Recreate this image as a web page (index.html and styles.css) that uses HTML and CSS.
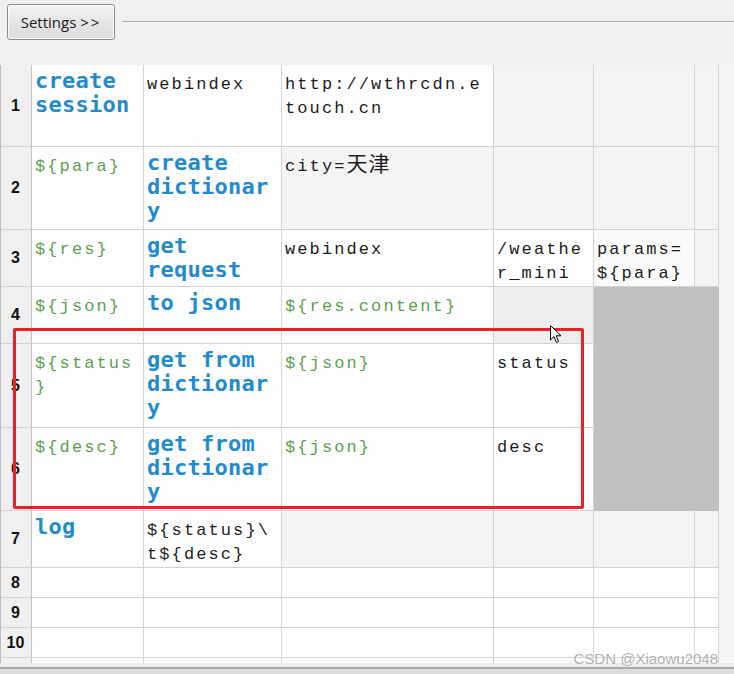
FILE: index.html
```html
<!DOCTYPE html>
<html>
<head>
<meta charset="utf-8">
<link rel="stylesheet" href="styles.css">
</head>
<body>
<div class="app">
  <div class="toolbar">
    <button class="settings">Settings <span class="arrows">&gt;&gt;</span></button>
    <div class="rule"></div>
  </div>
  <div class="sheet">
    <div class="grid">
      <div class="hd">1</div>
      <div class="cell kw">create session</div>
      <div class="cell tx">webindex</div>
      <div class="cell tx">http://wthrcdn.etouch.cn</div>
      <div class="cell off"></div>
      <div class="cell off"></div>
      <div class="cell off"></div>

      <div class="hd">2</div>
      <div class="cell var">${para}</div>
      <div class="cell kw">create dictionary</div>
      <div class="cell tx off">city=<span class="cjk">天津</span></div>
      <div class="cell off"></div>
      <div class="cell off"></div>
      <div class="cell off"></div>

      <div class="hd">3</div>
      <div class="cell var">${res}</div>
      <div class="cell kw">get request</div>
      <div class="cell tx">webindex</div>
      <div class="cell tx">/weather_mini</div>
      <div class="cell tx soft">params=${para}</div>
      <div class="cell off"></div>

      <div class="hd">4</div>
      <div class="cell var">${json}</div>
      <div class="cell kw">to json</div>
      <div class="cell var">${res.content}</div>
      <div class="cell off2"></div>
      <div class="dark"></div>

      <div class="hd">5</div>
      <div class="cell var">${status}</div>
      <div class="cell kw">get from dictionary</div>
      <div class="cell var">${json}</div>
      <div class="cell tx">status</div>

      <div class="hd">6</div>
      <div class="cell var">${desc}</div>
      <div class="cell kw">get from dictionary</div>
      <div class="cell var">${json}</div>
      <div class="cell tx">desc</div>

      <div class="hd">7</div>
      <div class="cell kw">log</div>
      <div class="cell tx">${status}\t${desc}</div>
      <div class="cell off"></div>
      <div class="cell off"></div>
      <div class="cell off"></div>
      <div class="cell off"></div>

      <div class="hd">8</div>
      <div class="cell"></div><div class="cell"></div><div class="cell"></div><div class="cell"></div><div class="cell"></div><div class="cell"></div>
      <div class="hd">9</div>
      <div class="cell"></div><div class="cell"></div><div class="cell"></div><div class="cell"></div><div class="cell"></div><div class="cell"></div>
      <div class="hd">10</div>
      <div class="cell"></div><div class="cell"></div><div class="cell"></div><div class="cell"></div><div class="cell"></div><div class="cell"></div>
      <div class="hd"></div>
      <div class="cell"></div><div class="cell"></div><div class="cell"></div><div class="cell"></div><div class="cell"></div><div class="cell"></div>
    </div>
  </div>
  <div class="hscroll"></div>

  <div class="highlight"></div>
  <svg class="cursor" width="12" height="19" viewBox="0 0 12 19">
    <path d="M0.5 0.5 L0.5 15 L4 11.6 L6.4 17.4 L8.6 16.5 L6.2 10.8 L11 10.8 Z" fill="#fff" stroke="#000" stroke-width="1" stroke-linejoin="round"/>
  </svg>
  <div class="watermark">CSDN @Xiaowu2048</div>
</div>
</body>
</html>
```

FILE: styles.css
```css
* { box-sizing: border-box; }

body {
  margin: 0;
  background: #f0f0f0;
}

.app {
  position: relative;
  width: 734px;
  height: 674px;
  overflow: hidden;
  background: #f0f0f0;
  display: flex;
  flex-direction: column;
}

.toolbar {
  height: 65px;
  flex: none;
  display: flex;
  align-items: flex-start;
  padding: 4px 0 0 7px;
}

.settings {
  width: 108px;
  height: 36px;
  margin: 0;
  padding: 0 0 1px 0;
  border: 1px solid #8c8c8c;
  border-radius: 3px;
  background: linear-gradient(#f4f4f4, #e4e4e4 55%, #dcdcdc);
  box-shadow: inset 0 0 0 1px #fbfbfb;
  font-family: "Open Sans", "Liberation Sans", sans-serif;
  font-size: 15px;
  color: #1a1a1a;
  text-align: center;
}

.arrows {
  letter-spacing: 2px;
}

.rule {
  flex: 1;
  margin: 17px 0 0 7px;
  border-top: 1px solid #a6a6a6;
  border-bottom: 1px solid #fafafa;
}

.sheet {
  height: 598px;
  flex: none;
  overflow: hidden;
  background: #f5f5f5;
}

.grid {
  display: grid;
  width: max-content;
  border-left: 1px solid #bdbdbd;
  grid-template-columns: 31px 112px 138px 212px 100px 101px 24px;
  grid-template-rows: 82px 83px 57px 57px 84px 83px 57px 30px 30px 30px 30px;
}

.hd {
  background: #f0f0f0;
  border-right: 1px solid #c4c4c4;
  border-bottom: 1px solid #d0d0d0;
  display: flex;
  align-items: center;
  justify-content: center;
  padding-right: 1px;
  font-family: "Liberation Sans", Arial, sans-serif;
  font-weight: bold;
  font-size: 16px;
  color: #111;
}

.cell {
  background: #fefefe;
  border-right: 1px solid #d2d2d2;
  border-bottom: 1px solid #d2d2d2;
  padding: 8px 2px 0 3px;
  line-height: 24px;
  overflow: hidden;
}

.tx, .var {
  font-family: "Liberation Mono", "Noto Sans CJK SC", monospace;
  font-size: 17px;
  letter-spacing: 2.1px;
  line-break: anywhere;
  word-break: break-all;
  color: #1c1c1c;
}

.cjk {
  font-family: "Noto Sans CJK SC", sans-serif;
  font-size: 21px;
  line-height: 0;
  letter-spacing: 1px;
}

.var {
  color: #5c9f50;
}

.kw {
  font-family: "DejaVu Sans Mono", monospace;
  font-weight: bold;
  font-size: 22px;
  letter-spacing: 0.25px;
  padding-top: 4px;
  overflow-wrap: anywhere;
  color: #238bcb;
}

.off {
  background: #f4f4f4;
}

.off2 {
  background: #efefef;
}

.soft {
  background: #fafafa;
}

.dark {
  grid-column: 6 / 8;
  grid-row: 4 / 7;
  background: #c0c0c0;
}

.hscroll {
  flex: 1;
  background: linear-gradient(#ebebeb 0 4px, #a9a9a9 4px 6px, #dcdcdc 6px);
}

.highlight {
  position: absolute;
  left: 13px;
  top: 328px;
  width: 571px;
  height: 181px;
  border: 3px solid #e8212b;
  border-radius: 2px;
}

.cursor {
  position: absolute;
  left: 550px;
  top: 325px;
}

.watermark {
  position: absolute;
  right: 16px;
  top: 650px;
  font-family: "Liberation Sans", Arial, sans-serif;
  font-size: 15px;
  color: rgba(150, 150, 150, 0.75);
  text-shadow: 0 0 1px rgba(255, 255, 255, 0.9);
}
```
